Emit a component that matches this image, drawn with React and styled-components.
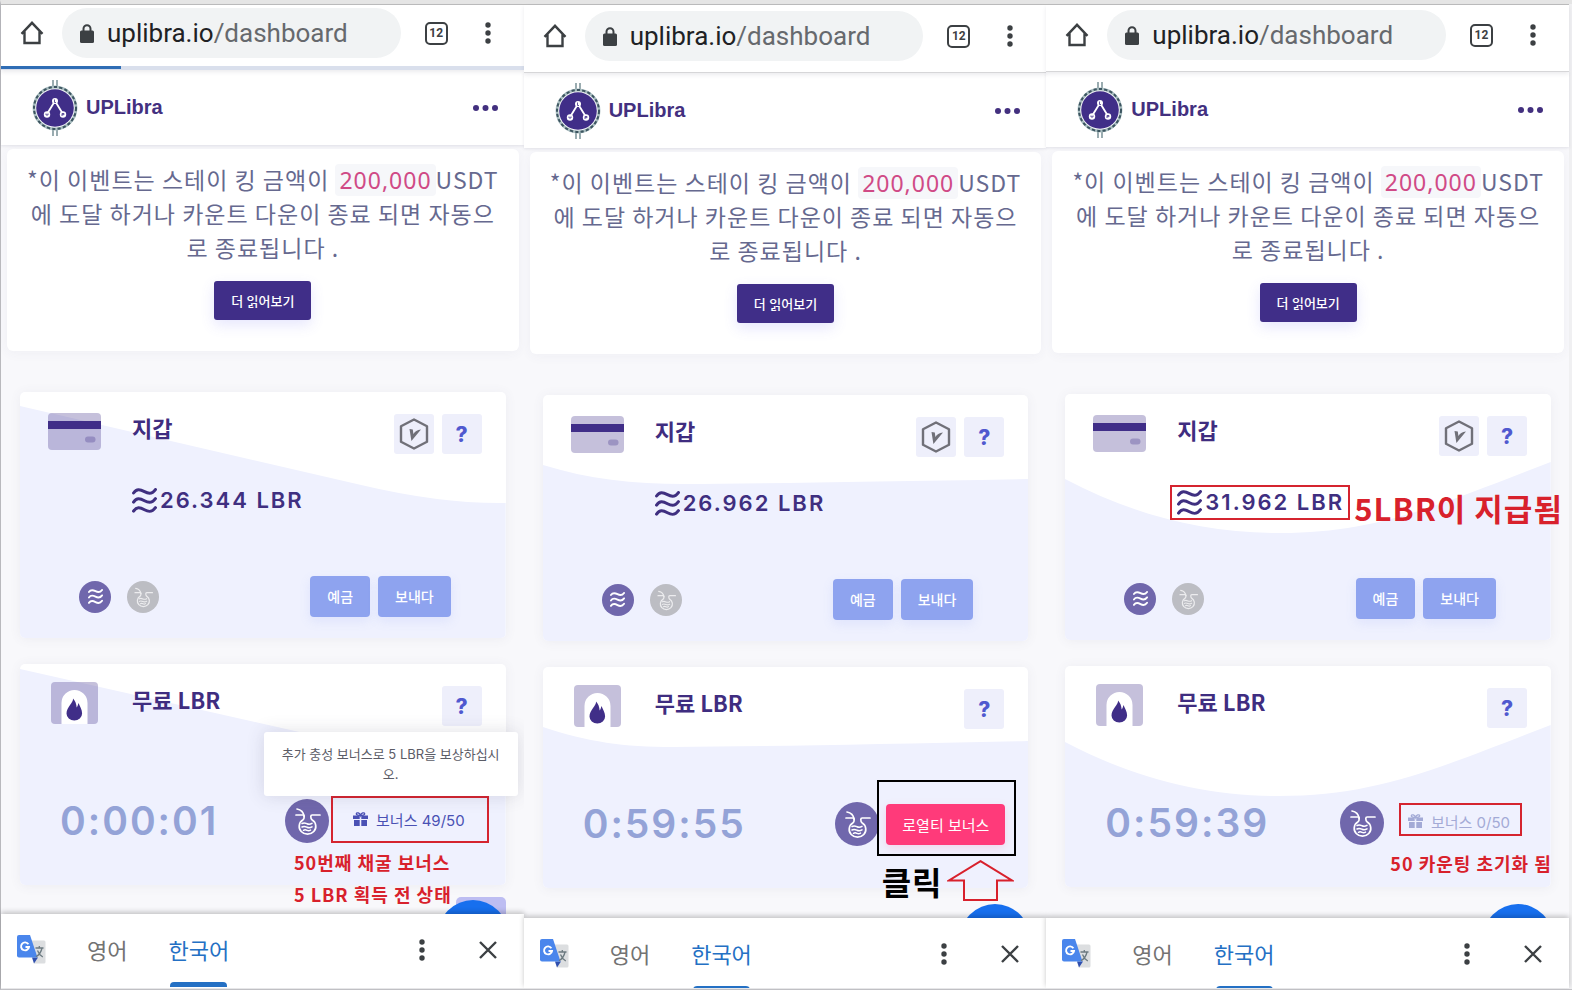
import React from "react";
import styled, { createGlobalStyle } from "styled-components";

const GlobalStyle = createGlobalStyle`
  * {
    box-sizing: border-box;
  }

  body {
    margin: 0;
    background: #e8e8ea;
    font-family: Inter, "Noto Sans CJK KR", sans-serif;
  }

  button {
    font-family: inherit;
    border: none;
    padding: 0;
    cursor: pointer;
  }

  svg {
    display: block;
    flex-shrink: 0;
  }
`;

const Board = styled.main`
  min-height: 100vh;
  display: grid;
  grid-template-columns: repeat(3, 1fr);
  padding: 0 3px 1px 0;
  border-top: 4px solid #e5e5e5;
  border-left: 1px solid #b9b9bd;
  border-bottom: 1px solid #c4c4c8;
  background: #f0f0f2;
`;

const Phone = styled.section`
  display: flex;
  flex-direction: column;
  min-width: 0;
  background: #f8f8fb;
  border-top: 1px solid #bdbdbd;
`;

/* ---------- browser toolbar ---------- */

const Toolbar = styled.header`
  position: relative;
  z-index: 2;
  display: flex;
  align-items: center;
  padding: ${(props) => props.$shift + 3}px 33px
    ${(props) => (props.$loading ? 8 : 11)}px 19px;
  background: #fff;
  border-bottom: ${(props) =>
    props.$loading ? "4px solid #d9dfec" : "1px solid #d6d6d8"};
  box-shadow: 0 2px 4px rgba(60, 60, 90, 0.1);
`;

const LoadingBar = styled.div`
  position: absolute;
  left: 0;
  bottom: -3px;
  width: 23%;
  height: 3px;
  background: #2f6db5;
`;

const PlainButton = styled.button`
  display: flex;
  align-items: center;
  justify-content: center;
  background: none;
  color: #3c4043;
`;

const Address = styled.a`
  flex: 1;
  min-width: 0;
  display: flex;
  align-items: center;
  gap: 13px;
  height: 50px;
  margin: 0 24px 0 18px;
  padding: 0 18px;
  border-radius: 25px;
  background: #f1f3f4;
  color: #202124;
  font-family: Roboto, sans-serif;
  font-size: 26px;
  white-space: nowrap;
  text-decoration: none;
`;

const AddressPath = styled.span`
  color: #66696d;
`;

const TabCount = styled(PlainButton)`
  width: 23px;
  height: 23px;
  margin-right: 37px;
  border: 2px solid #3c4043;
  border-radius: 5px;
  font-family: Roboto, sans-serif;
  font-size: 12px;
  font-weight: 700;
`;

/* ---------- site header ---------- */

const SiteHeader = styled.header`
  position: relative;
  z-index: 1;
  display: flex;
  align-items: center;
  gap: 7px;
  height: 75px;
  padding: 0 25px 0 30px;
  background: #fff;
  box-shadow: 0 1px 3px rgba(60, 60, 90, 0.12);
`;

const Brand = styled.a`
  flex: 1;
  color: #43307f;
  font-family: "Liberation Sans", sans-serif;
  font-size: 20px;
  font-weight: 700;
  text-decoration: none;
`;

const Content = styled.div`
  position: relative;
  flex: 1;
  display: flex;
  flex-direction: column;
  overflow: hidden;
`;

const Notice = styled.section`
  display: flex;
  flex-direction: column;
  align-items: center;
  gap: 17px;
  margin: 4px 5px 41px 6px;
  padding: 13px 8px 31px;
  border-radius: 6px;
  background: #fff;
  box-shadow: 0 2px 12px rgba(80, 80, 120, 0.05);
`;

const NoticeText = styled.p`
  margin: 0;
  color: #66698f;
  font-family: "Noto Sans CJK KR", sans-serif;
  font-size: 23px;
  line-height: 34px;
  letter-spacing: 1px;
  text-align: center;
  white-space: nowrap;
`;

const Code = styled.code`
  padding: 0 4px;
  border-radius: 4px;
  background: #f6f7fa;
  color: #d04a86;
  font-family: "Noto Sans", sans-serif;
  font-size: 23px;
  line-height: 30px;
`;

const ReadMore = styled.button`
  height: 39px;
  padding: 0 17px;
  border-radius: 3px;
  background: #402e88;
  color: #fff;
  font-size: 13px;
  font-weight: 500;
  box-shadow: 0 5px 14px rgba(100, 100, 240, 0.16);
`;

/* ---------- cards ---------- */

const Card = styled.section`
  position: relative;
  z-index: ${(props) => (props.$raised ? 1 : 0)};
  margin: 0 18px ${(props) => props.$gap}px 19px;
  padding: 22px 0 ${(props) => props.$bottom}px;
  border-radius: 5px;
  background: #fff;
  box-shadow: 0 1px 12px rgba(80, 80, 120, 0.07);
`;

const Wave = styled.svg`
  position: absolute;
  inset: 0;
  width: 100%;
  height: 100%;
  border-radius: 5px;
`;

const CardHead = styled.div`
  position: relative;
  display: flex;
  align-items: flex-start;
  gap: 8px;
  height: 41px;
  padding: 0 24px 0 28px;
`;

const IconSlot = styled.div`
  display: flex;
  align-items: center;
  justify-content: center;
  width: 53px;
  height: 34px;
`;

const Title = styled.h2`
  flex: 1;
  margin: 0 0 0 23px;
  color: #3f2d80;
  font-family: "Noto Sans CJK KR", sans-serif;
  font-size: 22px;
  font-weight: 700;
  line-height: 27px;
`;

const SquareButton = styled.button`
  display: flex;
  align-items: center;
  justify-content: center;
  width: 40px;
  height: 40px;
  border-radius: 3px;
  background: #eeeffb;
  color: #5059cf;
  font-size: 21px;
  font-weight: 800;
`;

const Amount = styled.div`
  position: relative;
  display: flex;
  align-items: center;
  gap: 3px;
  width: max-content;
  height: 24px;
  margin: 33px 0 0 112px;
  color: #3f2f80;
  font-size: 22px;
  font-weight: 600;
  letter-spacing: 2px;
`;

const WalletFoot = styled.div`
  position: relative;
  display: flex;
  align-items: center;
  gap: 8px;
  margin-top: 64px;
  padding: 0 55px 0 59px;
`;

const Coins = styled.div`
  flex: 1;
  display: flex;
  gap: 16px;
`;

const Coin = styled(PlainButton)`
  width: ${(props) => props.$size}px;
  height: ${(props) => props.$size}px;
  border-radius: 50%;
  background: ${(props) => (props.$muted ? "#bcbdc3" : "#7067ac")};
  color: ${(props) => (props.$muted ? "#ececee" : "#fff")};
`;

const ActionButton = styled.button`
  height: 41px;
  padding: 0 17px 2px;
  border-radius: 4px;
  background: #8ea3ef;
  color: #fff;
  font-size: 14px;
  font-weight: 500;
  box-shadow: 0 4px 12px rgba(110, 130, 240, 0.12);
`;

const MiningRow = styled.div`
  position: relative;
  display: flex;
  align-items: center;
  gap: 7px;
  height: 44px;
  margin-top: 72px;
  padding: 0 23px 0 40px;
`;

const Timer = styled.time`
  flex: 1;
  color: #94a3d7;
  font-size: 39px;
  font-weight: 600;
  letter-spacing: 2px;
  line-height: 44px;
`;

const BonusSlot = styled.div`
  position: relative;
`;

const BonusCounter = styled.button`
  display: flex;
  align-items: center;
  gap: 8px;
  height: 41px;
  padding: 0 18px 4px 17px;
  background: none;
  color: ${(props) => (props.$muted ? "#a3aad6" : "#4a51b4")};
  font-size: 15px;
`;

const ClaimButton = styled.button`
  height: 41px;
  padding: 0 16px;
  border-radius: 4px;
  background: #ff3a7a;
  color: #fff;
  font-size: 15px;
  box-shadow: 0 3px 10px rgba(255, 60, 130, 0.15);
`;

const Tooltip = styled.div`
  position: absolute;
  right: -12px;
  bottom: 89px;
  width: 254px;
  padding: 12px 8px;
  border-radius: 3px;
  background: #fff;
  color: #5b5c66;
  font-size: 13px;
  line-height: 20px;
  text-align: center;
  box-shadow: 0 0 18px rgba(60, 60, 90, 0.16);
`;

/* ---------- hand made marks over the screens ---------- */

const Frame = styled.div`
  position: absolute;
  inset: ${(props) => props.$inset};
  border: 2px solid ${(props) => (props.$dark ? "#000" : "#d5242f")};
  pointer-events: none;
`;

const Note = styled.div`
  position: absolute;
  top: ${(props) => props.$top}px;
  left: ${(props) => props.$left}px;
  display: flex;
  align-items: center;
  gap: 4px;
  color: ${(props) => (props.$dark ? "#000" : "#d8212c")};
  font-family: "Noto Sans CJK KR", sans-serif;
  font-size: ${(props) => props.$size}px;
  font-weight: 700;
  line-height: 32px;
  letter-spacing: 1px;
  white-space: nowrap;
`;

/* ---------- bottom ---------- */

const NextCard = styled.div`
  align-self: flex-end;
  width: 50px;
  height: 17px;
  margin-right: 18px;
  border-radius: 5px 5px 0 0;
  background: #bdbdf2;
`;

const ChatButton = styled.button`
  position: absolute;
  right: 16px;
  bottom: -56px;
  width: 70px;
  height: 70px;
  border-radius: 50%;
  background: #176fee;
`;

const BarShadow = styled.div`
  position: relative;
  z-index: 2;
  box-shadow: 0 -2px 5px rgba(0, 0, 0, 0.22);
`;

const TranslateBar = styled.footer`
  display: flex;
  align-items: flex-start;
  height: ${(props) => props.$height}px;
  padding: 0 27px 0 16px;
  overflow: hidden;
  background: #fff;
`;

const TranslateMark = styled.div`
  display: flex;
  align-items: center;
  height: 71px;
`;

const Language = styled.button`
  position: relative;
  height: 73px;
  margin-left: 41px;
  padding-bottom: 4px;
  background: none;
  color: ${(props) => (props.$active ? "#2470c4" : "#737373")};
  font-size: 22px;

  &::after {
    content: "";
    display: ${(props) => (props.$active ? "block" : "none")};
    position: absolute;
    left: 2px;
    right: 2px;
    bottom: 0;
    height: 5px;
    border-radius: 4px 4px 0 0;
    background: #2470c4;
  }
`;

const BarTools = styled.div`
  flex: 1;
  display: flex;
  align-items: center;
  justify-content: flex-end;
  gap: 54px;
  height: 71px;
`;

/* ---------- icons ---------- */

const HomeIcon = () => (
  <svg width="24" height="24" viewBox="0 0 24 24" fill="none" stroke="#3c4043" strokeWidth="2.4">
    <path d="M1.500 12.800 12 1.800l10.500 11M4.500 10.500V22h15V10.500" />
  </svg>
);

const LockIcon = () => (
  <svg width="14" height="19" viewBox="0 0 14 19">
    <rect y="6.500" width="14" height="12.500" rx="1.500" fill="#3c4043" />
    <path d="M3.500 7V4.800a3.500 3.500 0 0 1 7 0V7" fill="none" stroke="#3c4043" strokeWidth="2" />
  </svg>
);

const DotsIcon = () => (
  <svg width="6" height="22" viewBox="0 0 6 22" fill="#3c4043">
    <circle cx="3" cy="3" r="2.700" />
    <circle cx="3" cy="11" r="2.700" />
    <circle cx="3" cy="19" r="2.700" />
  </svg>
);

const MenuIcon = () => (
  <svg width="26" height="6" viewBox="0 0 26 6" fill="#43307f">
    <circle cx="3" cy="3" r="3" />
    <circle cx="12.500" cy="3" r="3" />
    <circle cx="22" cy="3" r="3" />
  </svg>
);

const CloseIcon = () => (
  <svg width="18" height="18" viewBox="0 0 18 18" stroke="#3c4043" strokeWidth="2.400">
    <path d="m1 1 16 16M17 1 1 17" />
  </svg>
);

const Logo = () => (
  <svg width="48" height="56" viewBox="0 0 48 56" fill="none">
    <path d="M22 0v6M26 0v6M22 50v6M26 50v6" stroke="#8fa3a8" strokeWidth="1.800" />
    <circle cx="24" cy="28" r="21" stroke="#a9bdc0" strokeWidth="2.800" />
    <circle cx="24" cy="28" r="21" stroke="#3c5560" strokeWidth="2" strokeDasharray="3.200 2.200" />
    <circle cx="24" cy="28" r="18.800" fill="#402e88" />
    <path d="m16 34 8-13 8 13" stroke="#fff" strokeWidth="1.800" />
    <g fill="#fff">
      <circle cx="24" cy="21" r="3" />
      <circle cx="16" cy="34.500" r="3.200" />
      <circle cx="32" cy="34.500" r="3.200" />
    </g>
    <path
      d="M23.500 19.500v3h1.500M15 33.500v1.500h2v-1.500M31 36v-2.500h2v1.200h-2"
      stroke="#402e88"
      strokeWidth=".8"
    />
  </svg>
);

const CardIcon = () => (
  <svg width="53" height="37" viewBox="0 0 53 37">
    <rect width="53" height="37" rx="4" fill="#402e88" opacity=".3" />
    <path d="M0 8h53v8H0z" fill="#402e88" />
    <rect x="37" y="23.500" width="10.500" height="6" rx="3" fill="#402e88" opacity=".3" />
  </svg>
);

const FurnaceIcon = () => (
  <svg width="47" height="42" viewBox="0 0 47 42">
    <path
      d="M4 0h39a4 4 0 0 1 4 4v34a4 4 0 0 1-4 4H4a4 4 0 0 1-4-4V4a4 4 0 0 1 4-4Z"
      fill="#402e88"
      opacity=".3"
    />
    <path d="M10.500 42V21a13 13 0 0 1 26 0v21Z" fill="#fff" />
    <path
      d="M22 16.500c.8 4-6.500 8.500-6.500 15a7.800 7 0 0 0 15.600 0c0-4-2-6.500-3.600-10.500-.6 2-.8 3.200-1.800 4.500-.4-3.700-1.300-6.500-3.700-9Z"
      fill="#402e88"
    />
  </svg>
);

const HexIcon = () => (
  <svg width="30" height="32" viewBox="0 0 30 32">
    <path
      d="m15 1.500 13 6.800v15.400l-13 6.800-13-6.800V8.300Z"
      fill="none"
      stroke="#707078"
      strokeWidth="2.400"
      strokeLinejoin="round"
    />
    <path d="m10.500 11 3.300.5.6 4.500c1.600-2.600 3.600-4 7.600-4.500l-9.600 11.500Z" fill="#707078" />
  </svg>
);

const LibraIcon = ({ size, weight }) => (
  <svg
    width={size}
    height={size}
    viewBox="0 0 24 24"
    fill="none"
    stroke="currentColor"
    strokeWidth={weight}
    strokeLinecap="round"
  >
    <path d="M1.500 4.800C4.500.5 7.500 1 12 3.500s7.500 2.200 10.500-2" />
    <path d="M1.500 13.500C4.500 9.200 7.500 9.700 12 12.200s7.500 2.200 10.500-2" />
    <path d="M1.500 22.200c3-4.300 6-3.800 10.500-1.300s7.500 2.200 10.500-2" />
  </svg>
);

const FlaskIcon = ({ size }) => (
  <svg
    width={size}
    height={size}
    viewBox="0 0 44 44"
    fill="none"
    stroke="currentColor"
    strokeWidth="1.700"
    strokeLinecap="round"
  >
    <path d="M11 16h7c1 0 1.200.5 1.200 1.500 0 1.800-.2 2.600-1.200 3.300a8.300 7.800 0 1 0 9 0c-1-.7-1.200-1.500-1.200-3.300 0-1 .4-1.500 1.400-1.500H35" />
    <path d="M12 10c3 .5 6.500 3 7.200 7.500" />
    <path d="M17 24.500c2-1.300 3.300-.6 5 .2s3 .8 5-.4M17 28c2-1.300 3.300-.6 5 .2s3 .8 5-.4M18.500 31.300c1.600-1 2.400-.5 3.600.1s2 .6 3.400-.3" strokeWidth="1.500" />
  </svg>
);

const GiftIcon = () => (
  <svg width="15" height="14" viewBox="0 0 15 14" fill="currentColor">
    <path d="M0 3.500h6.700V7H0zM8.300 3.500H15V7H8.300zM1 8h5.700v6H1zM8.300 8H14v6H8.300z" />
    <path
      d="M7.500 3.500C5.500 3.500 3 3 3.300 1.700 3.800 0 6.700.8 7.500 3.500c.8-2.700 3.700-3.500 4.200-1.800C12 3 9.500 3.500 7.500 3.500Z"
      fill="none"
      stroke="currentColor"
      strokeWidth="1.300"
    />
  </svg>
);

const TranslateIcon = () => (
  <svg width="29" height="29" viewBox="0 0 29 29">
    <path d="M11 5.500h16a1.500 1.500 0 0 1 1.500 1.500v20a1.500 1.500 0 0 1-1.500 1.500H17Z" fill="#dcdee0" />
    <path d="M15 22.500h6l-4 6Z" fill="#2f4fae" />
    <path d="M2 0h11l7.500 22.500H2a2 2 0 0 1-2-2V2a2 2 0 0 1 2-2Z" fill="#4a86ec" />
    <path
      d="M11.400 9.200A4 4 0 1 0 12 12H8.500"
      fill="none"
      stroke="#fff"
      strokeWidth="1.900"
    />
    <path
      d="M18.500 13h8M22.300 11v2M25 13c-.8 4-3 7-6 8.800M20.500 15.500c1 2.800 2.800 5 5.300 6.500"
      fill="none"
      stroke="#6c7a80"
      strokeWidth="1.300"
    />
  </svg>
);

const ArrowUp = () => (
  <svg width="67" height="41" viewBox="0 0 67 41" fill="none" stroke="#d8212c" strokeWidth="2">
    <path d="M33.500 1.200 65 20.500H50V40H17V20.500H2Z" />
  </svg>
);

/* ---------- screens ---------- */

const screens = [
  {
    id: "before",
    shift: 0,
    barHeight: 74,
    loading: true,
    balance: "26.344",
    timer: "0:00:01",
    walletWave: "M0 14 340 93Q420 112 484 111V246H0Z",
    freeWave: "M0 5 340 82Q420 101 484 100V221H0Z",
    bonus: "49/50",
    frame: "-5px -6px -1px -5px",
    tooltip: true,
    nextCard: true,
  },
  {
    id: "claim",
    shift: 3,
    barHeight: 70,
    balance: "26.962",
    timer: "0:59:55",
    walletWave: "M0 70C45 84 90 89 140 89Q260 88 484 84V246H0Z",
    freeWave: "M0 60C45 75 80 80 130 80Q260 79 484 74V221H0Z",
    frame: "-24px -11px -11px -9px",
  },
  {
    id: "after",
    shift: 2,
    barHeight: 70,
    balance: "31.962",
    timer: "0:59:39",
    walletWave: "M0 85C70 122 140 139 215 139 310 139 370 112 484 68V246H0Z",
    freeWave: "M0 76C70 113 140 130 213 130 310 130 370 103 484 59V221H0Z",
    bonus: "0/50",
    muted: true,
    frame: "0 6px 8px 8px",
    paid: true,
  },
];

const WalletCard = ({ screen }) => (
  <Card $bottom={21} $gap={26} $raised={screen.paid}>
    <Wave viewBox="0 0 484 246" preserveAspectRatio="none" aria-hidden="true">
      <path d={screen.walletWave} fill="#eff1fe" />
    </Wave>
    <CardHead>
      <IconSlot>
        <CardIcon />
      </IconSlot>
      <Title>지갑</Title>
      <SquareButton aria-label="V">
        <HexIcon />
      </SquareButton>
      <SquareButton>?</SquareButton>
    </CardHead>
    <Amount>
      <LibraIcon size={25} weight={2.9} />
      {screen.balance} LBR
      {screen.paid && <Frame $inset="-5px -6px -6px -7px" />}
    </Amount>
    {screen.paid && (
      <Note $top={98} $left={289} $size={31}>
        5LBR이 지급됨
      </Note>
    )}
    <WalletFoot>
      <Coins>
        <Coin $size={32} aria-label="LBR">
          <LibraIcon size={15} weight={3} />
        </Coin>
        <Coin $size={32} $muted aria-label="Flask">
          <FlaskIcon size={32} />
        </Coin>
      </Coins>
      <ActionButton>예금</ActionButton>
      <ActionButton>보내다</ActionButton>
    </WalletFoot>
  </Card>
);

const FreeCard = ({ screen }) => (
  <Card $bottom={42} $gap={12} $raised>
    <Wave viewBox="0 0 484 221" preserveAspectRatio="none" aria-hidden="true">
      <path d={screen.freeWave} fill="#eff1fe" />
    </Wave>
    <CardHead>
      <IconSlot>
        <FurnaceIcon />
      </IconSlot>
      <Title>무료 LBR</Title>
      <SquareButton>?</SquareButton>
    </CardHead>
    <MiningRow>
      <Timer>{screen.timer}</Timer>
      <Coin $size={44} aria-label="Flask">
        <FlaskIcon size={44} />
      </Coin>
      <BonusSlot>
        {screen.bonus ? (
          <BonusCounter $muted={screen.muted}>
            <GiftIcon />
            보너스 {screen.bonus}
          </BonusCounter>
        ) : (
          <ClaimButton>로열티 보너스</ClaimButton>
        )}
        <Frame $inset={screen.frame} $dark={!screen.bonus} />
      </BonusSlot>
    </MiningRow>
    {screen.tooltip && (
      <Tooltip role="tooltip">
        추가 충성 보너스로 5 LBR을 보상하십시
        <br />
        오.
      </Tooltip>
    )}
    {screen.id === "before" && (
      <Note $top={182} $left={274} $size={18}>
        50번째 채굴 보너스
        <br />5 LBR 획득 전 상태
      </Note>
    )}
    {screen.id === "claim" && (
      <Note $top={193} $left={339} $size={32} $dark>
        클릭
        <ArrowUp />
      </Note>
    )}
    {screen.id === "after" && (
      <Note $top={181} $left={325} $size={18}>
        50 카운팅 초기화 됨
      </Note>
    )}
  </Card>
);

const PhoneScreen = ({ screen }) => (
  <Phone>
    <Toolbar $shift={screen.shift} $loading={screen.loading}>
      <PlainButton aria-label="Home">
        <HomeIcon />
      </PlainButton>
      <Address href="#dashboard">
        <LockIcon />
        <span>
          uplibra.io<AddressPath>/dashboard</AddressPath>
        </span>
      </Address>
      <TabCount>12</TabCount>
      <PlainButton aria-label="Browser menu">
        <DotsIcon />
      </PlainButton>
      {screen.loading && <LoadingBar />}
    </Toolbar>
    <SiteHeader>
      <Logo />
      <Brand href="#home">UPLibra</Brand>
      <PlainButton aria-label="Menu">
        <MenuIcon />
      </PlainButton>
    </SiteHeader>
    <Content>
      <Notice>
        <NoticeText>
          *이 이벤트는 스테이 킹 금액이 <Code>200,000</Code>USDT
          <br />
          에 도달 하거나 카운트 다운이 종료 되면 자동으
          <br />로 종료됩니다 .
        </NoticeText>
        <ReadMore>더 읽어보기</ReadMore>
      </Notice>
      <WalletCard screen={screen} />
      <FreeCard screen={screen} />
      {screen.nextCard && <NextCard />}
      <ChatButton aria-label="Chat" />
    </Content>
    <BarShadow>
      <TranslateBar $height={screen.barHeight}>
        <TranslateMark>
          <TranslateIcon />
        </TranslateMark>
        <Language>영어</Language>
        <Language $active>한국어</Language>
        <BarTools>
          <PlainButton aria-label="Translate options">
            <DotsIcon />
          </PlainButton>
          <PlainButton aria-label="Close">
            <CloseIcon />
          </PlainButton>
        </BarTools>
      </TranslateBar>
    </BarShadow>
  </Phone>
);

const App = () => (
  <>
    <GlobalStyle />
    <Board>
      {screens.map((screen) => (
        <PhoneScreen key={screen.id} screen={screen} />
      ))}
    </Board>
  </>
);

export default App;
